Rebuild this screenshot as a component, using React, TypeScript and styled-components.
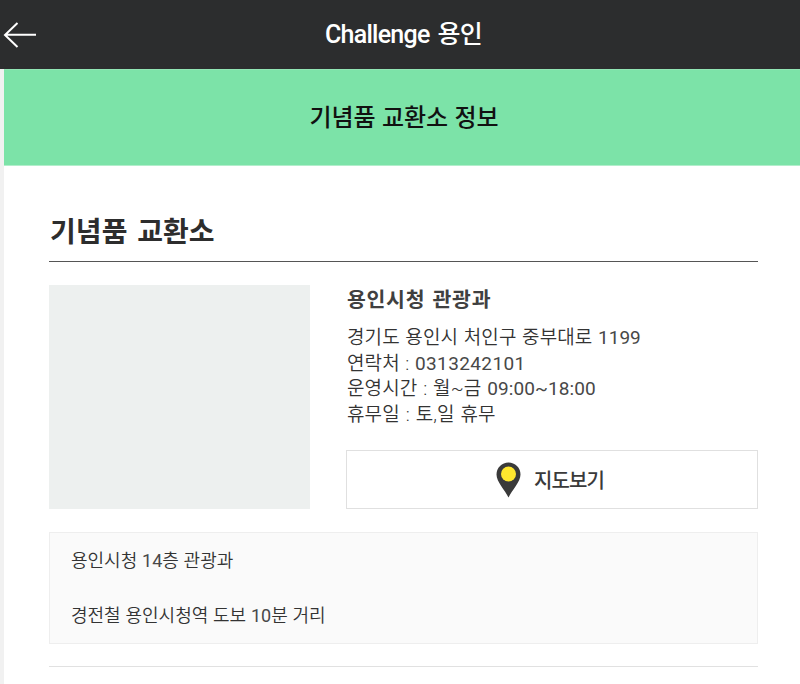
import React from 'react';
import styled, { createGlobalStyle } from 'styled-components';

const GlobalStyle = createGlobalStyle`
  *, *::before, *::after { box-sizing: border-box; }
  html, body { margin: 0; background: #fff; }
  body { font-family: Roboto, "Noto Sans CJK KR", sans-serif; color: #333; overflow: hidden; }
  h1, h2, h3, p { margin: 0; font-weight: inherit; white-space: nowrap; }
`;
const Page = styled.div`
  width: 800px;
  height: 684px;
  display: flex;
  flex-direction: column;
  overflow: hidden;
`;
const Header = styled.header`
  height: 69px;
  flex: none;
  display: grid;
  grid-template-columns: 40px 1fr 33px;
  align-items: center;
  background: #2c2d2e;
  color: #fff;
`;
const BackButton = styled.button`
  height: 69px;
  padding: 0 0 0 3px;
  border: 0;
  background: none;
  color: inherit;
  display: flex;
  align-items: center;
`;
const Title = styled.h1`
  display: flex;
  justify-content: center;
  padding-top: 1px;
  font-size: 25px;
  font-weight: 500;
  line-height: 36px;
  letter-spacing: -0.75px;
  word-spacing: 2.5px;
  white-space: pre;
`;
const Body = styled.main`
  flex: 1;
  border-left: 4px solid #f1f1f1;
`;
const Banner = styled.h2`
  height: 97px;
  display: flex;
  align-items: center;
  justify-content: center;
  padding: 0 0 4px 4px;
  border-top: 1px solid #92e5b5;
  border-bottom: 1px solid #b2eecb;
  background: #7ce3a8;
  color: #111;
  font-size: 24px;
  font-weight: 500;
  word-spacing: 0.3px;
`;
const Section = styled.section`
  padding: 41px 42px 0 45px;
`;
const SectionTitle = styled.h2`
  height: 55px;
  padding: 1px 0 0 1px;
  border-bottom: 1px solid #555;
  font-size: 28px;
  line-height: 50px;
  font-weight: 700;
  letter-spacing: 0.1px;
  word-spacing: 2.5px;
  color: #2d2d2d;
`;
const Place = styled.div`
  display: grid;
  grid-template-columns: 261px 1fr;
  column-gap: 36px;
  margin-top: 23px;
`;
const Photo = styled.div`
  height: 224px;
  background: #edf0ef;
`;
const Info = styled.div`
  display: flex;
  flex-direction: column;
  justify-content: space-between;
`;
const Name = styled.h3`
  padding: 0 0 0 1px;
  font-size: 20.5px;
  line-height: 30px;
  font-weight: 700;
  letter-spacing: 0.7px;
  word-spacing: 1.5px;
  color: #404040;
`;
const Details = styled.div`
  padding: 10px 0 0 1px;
  font-size: 19px;
  font-weight: 350;
  line-height: 25.5px;
`;
const Detail = styled.p<{ $wordGap?: number }>`
  letter-spacing: 0.1px;
  word-spacing: ${p => p.$wordGap ?? 1.2}px;
`;
const Digits = styled.span<{ $tracking?: number }>`
  font-weight: 400;
  color: #484848;
  letter-spacing: ${p => p.$tracking ?? 0}px;
`;
const MapButton = styled.button`
  height: 59px;
  padding: 0 4px 0 0;
  border: 1px solid #e0e0e0;
  background: #fff;
  color: #3a3a3a;
  display: flex;
  align-items: center;
  justify-content: center;
  gap: 13px;
  font: 500 20px Roboto, "Noto Sans CJK KR", sans-serif;
  letter-spacing: -0.9px;
`;
const Notes = styled.div`
  height: 112px;
  margin-top: 23px;
  padding: 14px 21px;
  border: 1px solid #eee;
  background: #fafafa;
  font-size: 18px;
  font-weight: 350;
  line-height: 27px;
  word-spacing: 0.4px;
  display: grid;
  row-gap: 28px;
  align-content: start;
`;
const Divider = styled.hr`
  margin: 22px 0 0;
  border: 0;
  border-top: 1px solid #e1e1e1;
`;

export default function App() {
  return (
    <Page>
      <GlobalStyle />
      <Header>
        <BackButton aria-label="뒤로">
          <svg width="34" height="28" viewBox="0 0 34 28" fill="none" stroke="currentColor" strokeWidth="2">
            <path d="M14.5 2 2 14l12.5 12M2 13.8h31" />
          </svg>
        </BackButton>
        <Title>Challenge 용인</Title>
      </Header>
      <Body>
        <Banner>기념품 교환소 정보</Banner>
        <Section>
          <SectionTitle>기념품 교환소</SectionTitle>
          <Place>
            <Photo />
            <Info>
              <div>
                <Name>용인시청 관광과</Name>
                <Details>
                  <Detail $wordGap={0.9}>경기도 용인시 처인구 중부대로 <Digits>1199</Digits></Detail>
                  <Detail $wordGap={0.8}>연락처 : <Digits $tracking={0.4}>0313242101</Digits></Detail>
                  <Detail $wordGap={1.1}>운영시간 : 월~금 <Digits $tracking={0.1}>09:00~18:00</Digits></Detail>
                  <Detail>휴무일 : 토,일 휴무</Detail>
                </Details>
              </div>
              <MapButton>
                <svg width="25" height="36" viewBox="0 0 25 36">
                  <path d="M12.5 35.5C9 28 .5 20 .5 12.5a12 12 0 0 1 24 0C24.5 20 16 28 12.5 35.5Z" fill="#3a3a3a" />
                  <circle cx="12.5" cy="12" r="7.5" fill="#ffe72e" />
                </svg>
                지도보기
              </MapButton>
            </Info>
          </Place>
          <Notes>
            <p>용인시청 <Digits>14</Digits>층 관광과</p>
            <p>경전철 용인시청역 도보 <Digits>10</Digits>분 거리</p>
          </Notes>
          <Divider />
        </Section>
      </Body>
    </Page>
  );
}
